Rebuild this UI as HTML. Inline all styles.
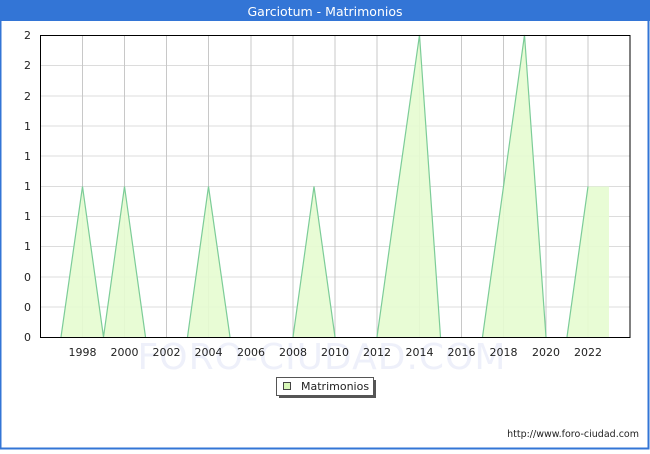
<!DOCTYPE html>
<html><head><meta charset="utf-8"><style>
body{margin:0;width:650px;height:450px;overflow:hidden;font-family:"DejaVu Sans","Liberation Sans",sans-serif}
</style></head><body>
<svg width="650" height="450" xmlns="http://www.w3.org/2000/svg" font-family="DejaVu Sans, Liberation Sans, sans-serif">
<rect x="0" y="0" width="650" height="450" fill="#fff"/>
<rect x="0.5" y="0.5" width="648" height="448" fill="none" stroke="#3375d6" stroke-width="2"/>
<rect x="0" y="0" width="650" height="21" fill="#3375d6"/>
<text x="325" y="16" fill="#fff" font-size="12.5" text-anchor="middle">Garciotum - Matrimonios</text>
<text x="322" y="369" fill="#eef0fa" font-size="36" text-anchor="middle" letter-spacing="1">FORO-CIUDAD.COM</text>
<g stroke="#dcdcdc" stroke-width="1">
<line x1="40" y1="65.5" x2="630" y2="65.5"/><line x1="40" y1="96" x2="630" y2="96"/>
<line x1="40" y1="126" x2="630" y2="126"/><line x1="40" y1="156" x2="630" y2="156"/>
<line x1="40" y1="186.5" x2="630" y2="186.5"/><line x1="40" y1="216.5" x2="630" y2="216.5"/>
<line x1="40" y1="246.5" x2="630" y2="246.5"/><line x1="40" y1="277" x2="630" y2="277"/>
<line x1="40" y1="307" x2="630" y2="307"/>
</g>
<g stroke="#c8c8c8" stroke-width="1">
<line x1="82.5" y1="35" x2="82.5" y2="337"/><line x1="124.5" y1="35" x2="124.5" y2="337"/>
<line x1="166.5" y1="35" x2="166.5" y2="337"/><line x1="208.5" y1="35" x2="208.5" y2="337"/>
<line x1="251" y1="35" x2="251" y2="337"/><line x1="293" y1="35" x2="293" y2="337"/>
<line x1="335" y1="35" x2="335" y2="337"/><line x1="377" y1="35" x2="377" y2="337"/>
<line x1="419.5" y1="35" x2="419.5" y2="337"/><line x1="461.5" y1="35" x2="461.5" y2="337"/>
<line x1="503.5" y1="35" x2="503.5" y2="337"/><line x1="546" y1="35" x2="546" y2="337"/>
<line x1="588" y1="35" x2="588" y2="337"/>
</g>
<polygon fill="#e5fcd0" fill-opacity="0.9" points="61,337 82.5,186.5 103.5,337 124.5,186.5 145.5,337 187.5,337 208.5,186.5 230,337 293,337 314,186.5 335,337 377,337 398,186.5 419.5,35 440.5,337 482.5,337 503.5,186.5 524.5,35 546,337 567,337 588,186.5 609,186.5 609,337"/>
<polyline fill="none" stroke="#7ccc98" stroke-width="1.2" points="61,337 82.5,186.5 103.5,337 124.5,186.5 145.5,337"/>
<polyline fill="none" stroke="#7ccc98" stroke-width="1.2" points="187.5,337 208.5,186.5 230,337"/>
<polyline fill="none" stroke="#7ccc98" stroke-width="1.2" points="293,337 314,186.5 335,337"/>
<polyline fill="none" stroke="#7ccc98" stroke-width="1.2" points="377,337 398,186.5 419.5,35 440.5,337"/>
<polyline fill="none" stroke="#7ccc98" stroke-width="1.2" points="482.5,337 503.5,186.5 524.5,35 546,337"/>
<polyline fill="none" stroke="#7ccc98" stroke-width="1.2" points="567,337 588,186.5"/>
<rect x="40.5" y="35.5" width="589.5" height="302" fill="none" stroke="#000" stroke-width="1"/>
<g font-size="11" fill="#222" text-anchor="end">
<text x="31" y="39">2</text><text x="31" y="69">2</text><text x="31" y="100">2</text>
<text x="31" y="130">1</text><text x="31" y="160">1</text><text x="31" y="190">1</text>
<text x="31" y="220">1</text><text x="31" y="250">1</text><text x="31" y="281">0</text>
<text x="31" y="311">0</text><text x="31" y="341">0</text>
</g>
<g font-size="11" fill="#222" text-anchor="middle">
<text x="82.5" y="356">1998</text><text x="124.5" y="356">2000</text><text x="166.5" y="356">2002</text>
<text x="208.5" y="356">2004</text><text x="251" y="356">2006</text><text x="293" y="356">2008</text>
<text x="335" y="356">2010</text><text x="377" y="356">2012</text><text x="419.5" y="356">2014</text>
<text x="461.5" y="356">2016</text><text x="503.5" y="356">2018</text><text x="546" y="356">2020</text>
<text x="588" y="356">2022</text>
</g>
<rect x="279" y="380" width="97" height="18" fill="#555"/>
<rect x="276.5" y="377.5" width="97" height="18" fill="#fff" stroke="#555" stroke-width="1"/>
<rect x="283.5" y="382.5" width="7" height="7" fill="#d8f8b8" stroke="#444" stroke-width="1"/>
<text x="301" y="390" font-size="11" fill="#222">Matrimonios</text>
<text x="639" y="437" font-size="9.5" fill="#222" text-anchor="end">http://www.foro-ciudad.com</text>
</svg>
</body></html>
